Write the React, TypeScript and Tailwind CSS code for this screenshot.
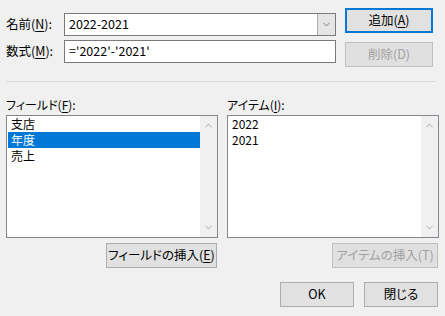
import { ChevronDown, ChevronUp } from 'lucide-react'

function U({ children }: { children: string }) {
  return <span className="underline underline-offset-2">{children}</span>
}

function Btn({
  children,
  w,
  primary,
  disabled,
}: {
  children: React.ReactNode
  w: string
  primary?: boolean
  disabled?: boolean
}) {
  const border = primary
    ? 'border-2 border-[#0078d7]'
    : disabled
      ? 'border border-[#bfbfbf]'
      : 'border border-[#adadad]'
  return (
    <button
      className={`${w} h-[25px] ${border} ${disabled ? 'bg-[#e0e0e0] text-[#a0a0a0]' : 'bg-[#e1e1e1] text-black'} flex items-center justify-center text-[12.5px] leading-none`}
    >
      {children}
    </button>
  )
}

function ListBox({
  items,
  selected,
}: {
  items: string[]
  selected?: number
}) {
  return (
    <div className="w-[212px] h-[123px] border border-[#828790] bg-white flex">
      <div className="flex-1 pl-[1px]">
        {items.map((it, i) => (
          <div
            key={it}
            className={`h-[16px] pl-[3px] flex items-center text-[12px] leading-[14px] ${i === selected ? 'bg-[#0078d7] text-white' : 'text-black'}`}
          >
            {it}
          </div>
        ))}
      </div>
      <div className="w-[17px] bg-[#f0f0f0] flex flex-col justify-between items-center py-[4px]">
        <ChevronUp size={11} strokeWidth={2.5} className="text-[#c2c2c2]" />
        <ChevronDown size={11} strokeWidth={2.5} className="text-[#c2c2c2]" />
      </div>
    </div>
  )
}

export default function App() {
  return (
    <div
      className="w-[445px] h-[316px] bg-[#f0f0f0] text-black [font-feature-settings:'palt']"
      style={{ fontFamily: '"Noto Sans CJK JP", "Noto Sans", sans-serif' }}
    >
      {/* top */}
      <div className="flex pt-[8px] pl-[6px]">
        <div className="flex flex-col gap-[4px] mt-[5px]">
          <div className="flex items-center">
            <span className="w-[58px] text-[12.5px]">
              名前(<U>N</U>):
            </span>
            <div className="w-[272px] h-[23px] border border-[#7a7a7a] bg-white flex">
              <span className="flex-1 pl-[4px] flex items-center text-[12.5px]">2022-2021</span>
              <div className="w-[18px] bg-[#e5e5e5] border-l border-[#adadad] flex items-center justify-center">
                <ChevronDown size={11} strokeWidth={1.5} className="text-[#555]" />
              </div>
            </div>
          </div>
          <div className="flex items-center">
            <span className="w-[58px] text-[12.5px]">
              数式(<U>M</U>):
            </span>
            <div className="w-[272px] h-[23px] border border-[#7a7a7a] bg-white flex items-center pl-[4px] text-[12.5px]">
              ='2022'-'2021'
            </div>
          </div>
        </div>
        <div className="flex flex-col gap-[9px] ml-[9px]">
          <Btn w="w-[88px]" primary>
            追加(<U>A</U>)
          </Btn>
          <Btn w="w-[88px]" disabled>
            削除(D)
          </Btn>
        </div>
      </div>

      {/* separator */}
      <div className="mt-[14px] ml-[6px] w-[430px] h-px bg-[#dadada]" />

      {/* lists */}
      <div className="flex gap-[9px] pl-[6px] mt-[15px]">
        <div className="flex flex-col">
          <span className="text-[12px] h-[18px] leading-[16px]">
            フィールド(<U>F</U>):
          </span>
          <ListBox items={['支店', '年度', '売上']} selected={1} />
          <div className="flex justify-end mt-[5px] pr-[1px]">
            <Btn w="w-[111px]">
              フィールドの挿入(<U>E</U>)
            </Btn>
          </div>
        </div>
        <div className="flex flex-col">
          <span className="text-[12px] h-[18px] leading-[16px]">
            アイテム(<U>I</U>):
          </span>
          <ListBox items={['2022', '2021']} />
          <div className="flex justify-end mt-[5px] mr-[1px]">
            <Btn w="w-[106px]" disabled>
              アイテムの挿入(T)
            </Btn>
          </div>
        </div>
      </div>

      {/* footer */}
      <div className="flex justify-end gap-[10px] pr-[7px] mt-[14px]">
        <Btn w="w-[74px]">OK</Btn>
        <Btn w="w-[74px]">閉じる</Btn>
      </div>
    </div>
  )
}
